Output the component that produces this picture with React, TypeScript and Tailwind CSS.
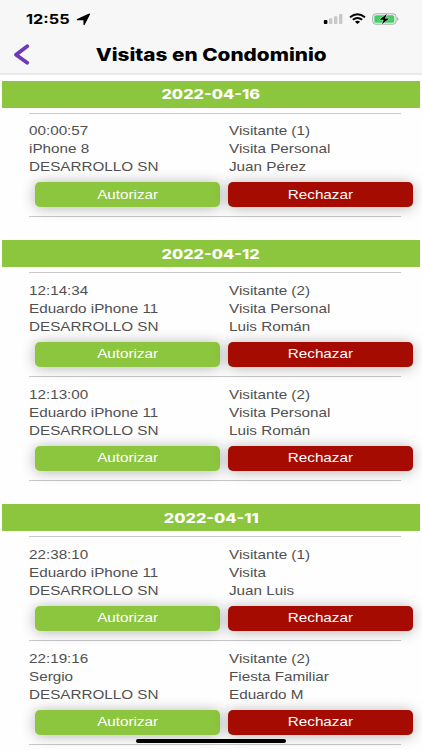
type Visit = { time: string; device: string; place: string; count: string; kind: string; who: string };
type Day = { date: string; visits: Visit[] };

const place = "DESARROLLO SN";
const days: Day[] = [
  {
    date: "2022-04-16",
    visits: [{ time: "00:00:57", device: "iPhone 8", place, count: "Visitante (1)", kind: "Visita Personal", who: "Juan Pérez" }],
  },
  {
    date: "2022-04-12",
    visits: [
      { time: "12:14:34", device: "Eduardo iPhone 11", place, count: "Visitante (2)", kind: "Visita Personal", who: "Luis Román" },
      { time: "12:13:00", device: "Eduardo iPhone 11", place, count: "Visitante (2)", kind: "Visita Personal", who: "Luis Román" },
    ],
  },
  {
    date: "2022-04-11",
    visits: [
      { time: "22:38:10", device: "Eduardo iPhone 11", place, count: "Visitante (1)", kind: "Visita", who: "Juan Luis" },
      { time: "22:19:16", device: "Sergio", place, count: "Visitante (2)", kind: "Fiesta Familiar", who: "Eduardo M" },
    ],
  },
];

function Lines({ items }: { items: string[] }) {
  return (
    <div className="origin-left scale-x-[1.19] text-[12.8px] leading-[17.8px] whitespace-nowrap text-[#505050]">
      {items.map((t) => (
        <div key={t}>{t}</div>
      ))}
    </div>
  );
}

function ActionButton({ label, color }: { label: string; color: string }) {
  return (
    <button className={`flex h-[25px] items-center justify-center rounded-[5px] pt-px shadow-[0_1px_14px_rgba(0,0,0,0.3)] ${color}`}>
      <span className="scale-x-[1.19] text-[12.8px] leading-none text-white">{label}</span>
    </button>
  );
}

function VisitRow({ v }: { v: Visit }) {
  return (
    <div className="h-[103.9px] pt-[9.9px]">
      <div className="grid grid-cols-[200.3px_172px] pl-[29px]">
        <Lines items={[v.time, v.device, v.place]} />
        <Lines items={[v.count, v.kind, v.who]} />
      </div>
      <div className="mt-[6.2px] grid grid-cols-[185px_185px] gap-[8.3px] pl-[35px]">
        <ActionButton label="Autorizar" color="bg-[#8cc63e]" />
        <ActionButton label="Rechazar" color="bg-[#a60b02]" />
      </div>
    </div>
  );
}

function Divider() {
  return <div className="mr-[21px] -mb-px ml-[29px] h-px bg-[#c9c9cb]" />;
}

function StatusBar() {
  return (
    <div className="flex h-[38px] items-center pr-[23px] pl-[26px]">
      <span className="w-[50px]">
        <span className="inline-block origin-left scale-x-[1.2] font-[Inter,sans-serif] text-[13.6px] leading-none font-bold">12:55</span>
      </span>
      <svg width="15" height="13" viewBox="0 0 15 13">
        <path d="M13.4 1.2L8.1 11.4V6.6H1.4Z" fill="#000" stroke="#000" strokeWidth="1.3" strokeLinejoin="round" />
      </svg>
      <div className="flex-1" />
      <svg width="20" height="12" viewBox="0 0 20 12">
        <rect x=".8" y="7" width="3.6" height="4" rx="1" fill="#000" />
        <rect x="6" y="5.2" width="3.4" height="5.8" rx=".8" fill="#c8c8c8" />
        <rect x="11" y="3.2" width="3.4" height="7.8" rx=".8" fill="#c8c8c8" />
        <rect x="16" y="1" width="3.4" height="10" rx=".8" fill="#c8c8c8" />
      </svg>
      <svg className="ml-[6px]" width="17" height="12" viewBox="0 0 17 12">
        <path d="M1 4.2Q8.5-1.8 16 4.2M3.8 6.8Q8.5 3 13.2 6.8" fill="none" stroke="#000" strokeWidth="1.9" />
        <path d="M5.9 8.8Q8.5 6.8 11.1 8.8L8.5 11Z" fill="#000" />
      </svg>
      <svg className="ml-[6px]" width="27" height="14" viewBox="0 0 27 14">
        <rect x=".7" y="1.8" width="23.4" height="10.4" rx="3" fill="none" stroke="#aaa" strokeWidth="1" />
        <rect x="2.3" y="3.2" width="20" height="7.6" rx="1.6" fill="#43cf66" />
        <path d="M25.1 5Q27.8 7 25.1 9Z" fill="#aaa" />
        <path d="M14.9 1.8L7.5 7.7H11.7L9.8 12.3L17.2 6.4H13Z" fill="#000" stroke="#f7f7f7" strokeWidth=".9" paintOrder="stroke" />
      </svg>
    </div>
  );
}

export default function App() {
  return (
    <div className="relative h-[750px] w-[422px] overflow-hidden bg-[#fefefe] font-['Liberation_Sans',Arial,sans-serif] text-black">
      <header className="h-[75px] border-b-2 border-[#e9e9e9] bg-[#f7f7f7]">
        <StatusBar />
        <div className="flex h-[33px] items-center">
          <svg className="ml-[13px]" width="18" height="22" viewBox="0 0 18 22">
            <path d="M14.2 2.2L3 10.7L14.2 18.7" fill="none" stroke="#6e3ab7" strokeWidth="3.8" strokeLinecap="round" strokeLinejoin="round" />
          </svg>
          <h1 className="mr-[31px] flex flex-1 justify-center">
            <span className="scale-x-[1.2] font-[Inter,sans-serif] text-[17.3px] leading-none font-extrabold whitespace-nowrap">Visitas en Condominio</span>
          </h1>
        </div>
      </header>
      <main className="pt-[5.5px]">
        {days.map((d) => (
          <section key={d.date} className="mb-[24px]">
            <div className="mr-[2px] mb-[5px] ml-[2px] flex h-[27px] items-center justify-center bg-[#8cc63e] pt-[1.5px]">
              <span className="scale-x-[1.21] font-[Inter,sans-serif] text-[13.5px] leading-none font-extrabold text-white">{d.date}</span>
            </div>
            <Divider />
            {d.visits.map((v) => (
              <div key={v.time}>
                <VisitRow v={v} />
                <Divider />
              </div>
            ))}
          </section>
        ))}
      </main>
      <div className="absolute top-[739px] left-[136px] h-[4px] w-[150px] rounded-full bg-black" />
    </div>
  );
}
